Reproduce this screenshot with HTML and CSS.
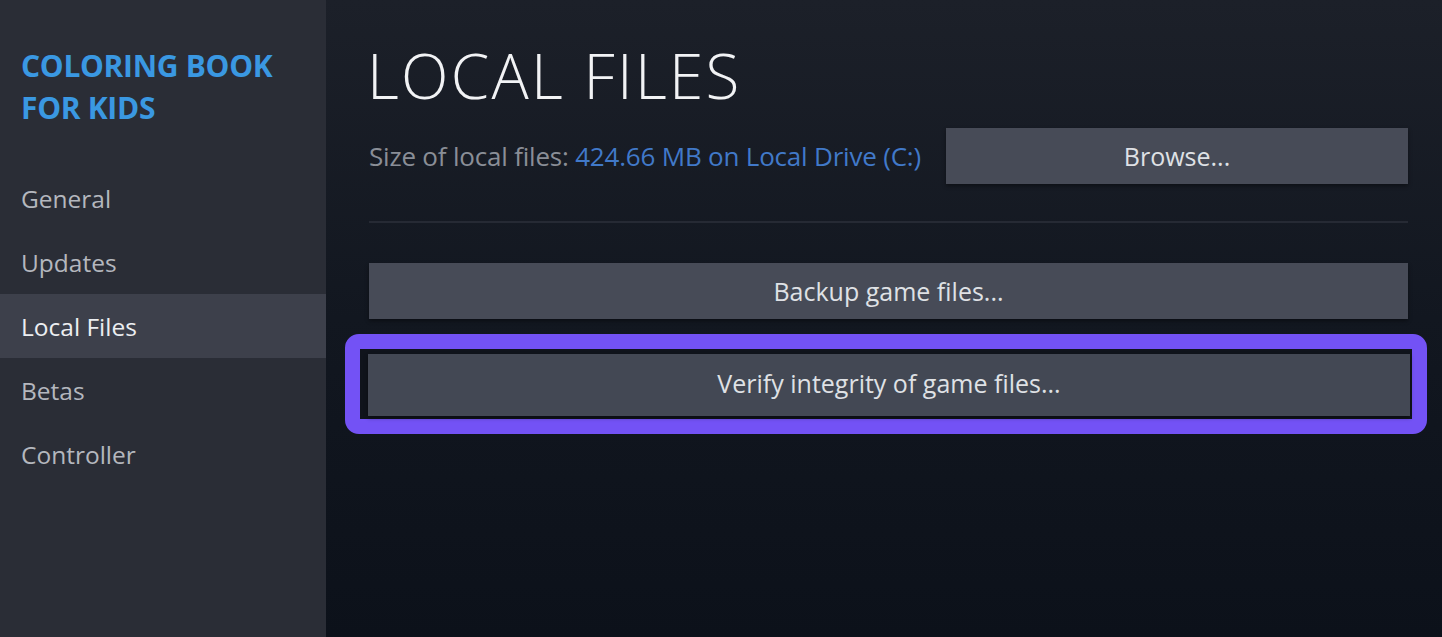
FILE: index.html
```html
<!DOCTYPE html>
<html>
<head>
<meta charset="utf-8">
<link rel="stylesheet" href="styles.css">
</head>
<body>
<div class="app">
  <aside class="sidebar">
    <h1 class="game-title">COLORING BOOK<br>FOR KIDS</h1>
    <nav class="nav">
      <div class="nav-item">General</div>
      <div class="nav-item">Updates</div>
      <div class="nav-item active">Local Files</div>
      <div class="nav-item">Betas</div>
      <div class="nav-item">Controller</div>
    </nav>
  </aside>
  <main class="content">
    <h2 class="page-title">LOCAL FILES</h2>
    <div class="size-row">
      <div class="size-text">Size of local files: <span class="size-value">424.66 MB on Local Drive (C:)</span></div>
      <div class="btn browse">Browse...</div>
    </div>
    <div class="separator"></div>
    <div class="btn wide">Backup game files...</div>
    <div class="highlight">
      <div class="btn wide verify">Verify integrity of game files...</div>
    </div>
  </main>
</div>
</body>
</html>
```
FILE: styles.css
```css
* { box-sizing: border-box; }
html, body { margin: 0; padding: 0; }
body {
  width: 1442px;
  height: 637px;
  overflow: hidden;
  font-family: "Open Sans", "Noto Sans", sans-serif;
  background: #0d121b;
}
.app {
  display: flex;
  height: 637px;
}
.sidebar {
  width: 326px;
  flex: none;
  background: #2a2d36;
  padding-top: 45px;
}
.game-title {
  margin: 0 0 0 21px;
  font-size: 30px;
  line-height: 42px;
  font-weight: 700;
  color: #3a98e2;
  letter-spacing: -0.3px;
}
.nav {
  margin-top: 37px;
  display: flex;
  flex-direction: column;
}
.nav-item {
  height: 64px;
  display: flex;
  align-items: center;
  padding-left: 21px;
  font-size: 24.5px;
  font-weight: 500;
  color: #b4b7be;
}
.nav-item.active {
  background: #3d404b;
  color: #eceef1;
}
.content {
  flex: 1;
  background: linear-gradient(180deg, #1c2029 0%, #121720 50%, #0c111a 100%);
  padding: 40px 34px 0 43px;
  display: flex;
  flex-direction: column;
}
.page-title {
  margin: 0 0 0 -2px;
  font-size: 62px;
  line-height: 70px;
  font-weight: 300;
  color: #f2f3f5;
  letter-spacing: 2.3px;
}
.size-row {
  margin-top: 18px;
  display: flex;
  align-items: center;
  justify-content: space-between;
}
.size-text {
  font-size: 26px;
  font-weight: 500;
  color: #8a8e97;
  letter-spacing: -0.2px;
}
.size-value { color: #4179c9; }
.btn {
  background: #474b57;
  color: #dfe1e5;
  font-size: 25px;
  font-weight: 500;
  height: 56px;
  display: flex;
  align-items: center;
  justify-content: center;
  box-shadow: 0 2px 4px rgba(0,0,0,0.4);
}
.browse { width: 462px; }
.separator {
  height: 2px;
  background: #262a34;
  margin-top: 37px;
}
.wide { margin-top: 40px; }
.highlight {
  margin: 15px -19px 0 -24px;
  border: 15px solid #7352f5;
  border-radius: 14px;
  background: #10141c;
  padding: 5px 2px 3px 8px;
}
.verify {
  margin-top: 0;
  height: 62px;
  padding-bottom: 4px;
  background: #434854;
}
```
